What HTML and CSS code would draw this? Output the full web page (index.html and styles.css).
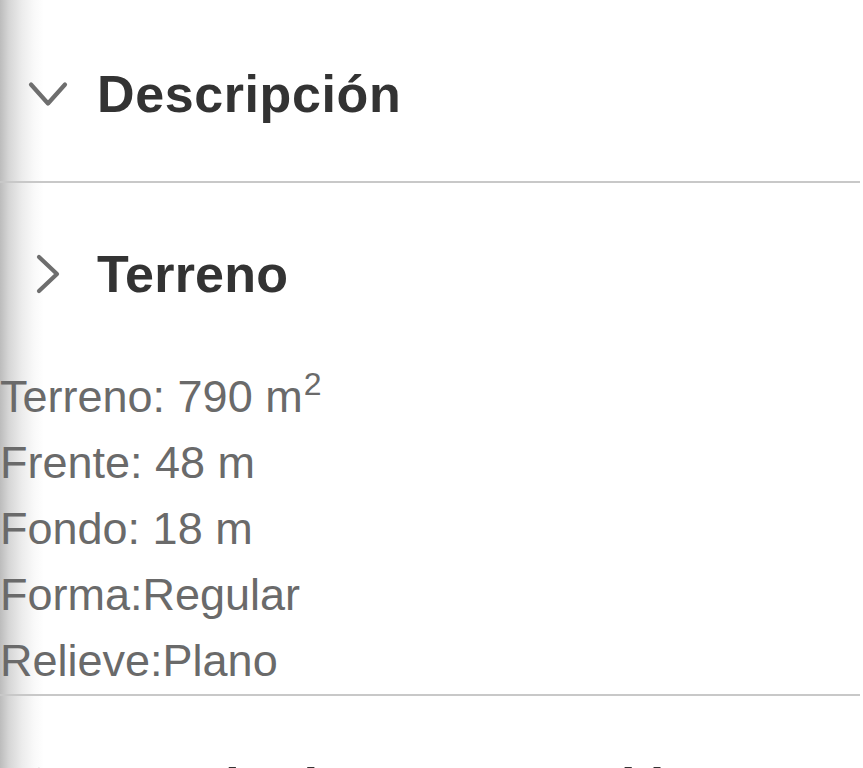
FILE: index.html
```html
<!DOCTYPE html>
<html lang="es">

<head>
    <meta charset="UTF-8">
    <meta name="viewport" content="width=device-width, initial-scale=1.0">
    <title>Ficha - Terreno</title>
    <link rel="stylesheet" href="styles.css">
</head>

<body>
    <!-- Descripcion (abierta) -->
    <div class="section">
        <div class="section-head">
            <svg class="chevron" viewBox="0 0 46 46">
                <polyline points="6,13.5 23,32.5 40,13.5" />
            </svg>
            <h2 class="wide">Descripción</h2>
        </div>
    </div>

    <!-- Terreno -->
    <div class="section">
        <div class="section-head">
            <svg class="chevron" viewBox="0 0 46 46">
                <polyline points="14,6 32,23 14,40" />
            </svg>
            <h2>Terreno</h2>
        </div>
        <ul class="details">
            <li>Terreno: 790 m<sup>2</sup></li>
            <li>Frente: 48 m</li>
            <li>Fondo: 18 m</li>
            <li>Forma:Regular</li>
            <li>Relieve:Plano</li>
        </ul>
    </div>

    <!-- Siguiente -->
    <div class="section">
        <div class="section-head">
            <svg class="chevron" viewBox="0 0 46 46">
                <polyline points="14,6 32,23 14,40" />
            </svg>
            <h2>Estado de conservación</h2>
        </div>
    </div>
</body>

</html>
```
FILE: styles.css
```css
body {
    margin: 0;
    padding-top: 3px;
    font-family: "Liberation Sans", Arial, sans-serif;
    background: linear-gradient(to right, #bcbcbc 0, #d6d6d6 9px, #ececec 22px, #f9f9f9 34px, #fff 44px);
    min-height: 100vh;
    overflow: hidden;
}

.section {
    border-bottom: 2px solid #c8c8c8;
    margin-right: 3px;
}

.section-head {
    display: flex;
    align-items: center;
    padding: 61px 0 57px 25px;
}

.chevron {
    width: 46px;
    height: 46px;
    flex-shrink: 0;
    margin-right: 26px;
}

.chevron polyline {
    fill: none;
    stroke: #6e6e6e;
    stroke-width: 4.2;
    stroke-linecap: round;
    stroke-linejoin: round;
}

.section-head h2 {
    margin: 0;
    font-size: 52px;
    line-height: 60px;
    font-weight: bold;
    color: #333333;
    letter-spacing: 0.2px;
}

.section-head h2.wide {
    letter-spacing: 0.6px;
}

.details {
    list-style: none;
    margin: 0;
    padding: 3px 0 0 0;
    font-size: 45px;
    line-height: 66px;
    color: #6a6a6a;
}

.details sup {
    font-size: 32px;
    line-height: 0;
    vertical-align: 17px;
    margin-left: 1px;
}
```
